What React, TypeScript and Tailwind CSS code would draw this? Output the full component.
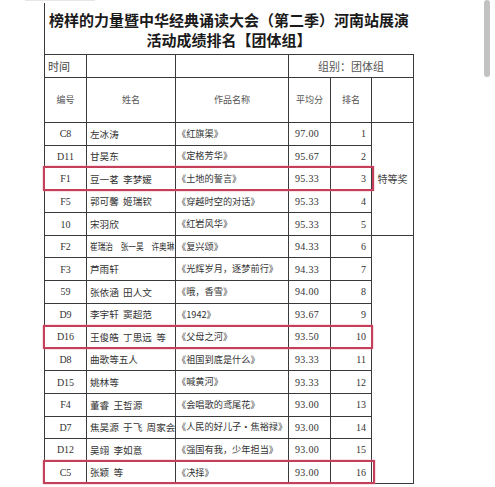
const rows = [
  { code: "C8", name: "左冰涛", work: "《红旗渠》", score: "97.00", rank: "1" },
  { code: "D11", name: "甘昊东", work: "《定格芳华》", score: "95.67", rank: "2" },
  { code: "F1", name: "豆一茗  李梦媛", work: "《土地的誓言》", score: "95.33", rank: "3" },
  { code: "F5", name: "郭可馨  姬瑞钦", work: "《穿越时空的对话》", score: "95.33", rank: "4" },
  { code: "10", name: "宋羽欣", work: "《红岩风华》", score: "95.33", rank: "5" },
  { code: "F2", name: "崔瑞治　张一昊　许奥琳", work: "《复兴颂》", score: "94.33", rank: "6", squeeze: true },
  { code: "F3", name: "芦雨轩", work: "《光辉岁月，逐梦前行》", score: "94.33", rank: "7" },
  { code: "59", name: "张依涵  田人文", work: "《哦，香雪》", score: "94.00", rank: "8" },
  { code: "D9", name: "李宇轩  窦超范", work: "《1942》", score: "93.67", rank: "9" },
  { code: "D16", name: "王俊皓  丁思远  等", work: "《父母之河》", score: "93.50", rank: "10" },
  { code: "D8", name: "曲歌等五人", work: "《祖国到底是什么》", score: "93.33", rank: "11" },
  { code: "D15", name: "姚林等", work: "《喊黄河》", score: "93.33", rank: "12" },
  { code: "F4", name: "董睿  王哲源", work: "《会唱歌的鸢尾花》", score: "93.00", rank: "13" },
  { code: "D7", name: "焦昊源  于飞  周家会", work: "《人民的好儿子・焦裕禄》", score: "93.00", rank: "14" },
  { code: "D12", name: "吴翊  李如意", work: "《强国有我，少年担当》", score: "93.00", rank: "15" },
  { code: "C5", name: "张颖  等", work: "《决择》", score: "93.00", rank: "16" },
];

const cell = "border border-[#3a3a3a] p-0 overflow-hidden whitespace-pre";
const serif = "font-['Liberation_Serif','Noto_Sans_CJK_SC',serif]";

function Highlight({ top, height, width }: { top: string; height: string; width: string }) {
  // red marker boxes drawn over the sheet
  return (
    <div
      className={`absolute left-[-1px] ${top} ${height} ${width} border-[2.5px] border-[#c4405a] shadow-[0_0_1.5px_#e58a9a] pointer-events-none`}
    />
  );
}

export default function App() {
  return (
    <div className="relative w-[495px] h-[487px] overflow-hidden bg-white text-[#333] font-['Noto_Sans_CJK_SC',sans-serif]">
      <div className="ml-[25px] w-[70px] h-px bg-[#e6e6e6]" />

      <div className="ml-[44px] w-[369px]">
        <div className="mt-[2px] h-[51px] pt-[7px] border-l border-[#3a3a3a] text-center text-[15px] leading-[20px] font-bold text-[#1a1a1a]">
          <div className="whitespace-nowrap">榜样的力量暨中华经典诵读大会（第二季）河南站展演</div>
          <div>活动成绩排名【团体组】</div>
        </div>

        <div className="relative">
          <table className="table-fixed border-collapse w-[369px] text-[10px]">
            <colgroup>
              <col className="w-[42px]" />
              <col className="w-[89px]" />
              <col className="w-[113px]" />
              <col className="w-[42px]" />
              <col className="w-[41px]" />
              <col className="w-[42px]" />
            </colgroup>
            <tbody>
              <tr className="h-[23px]">
                <td className={`${cell} pl-[3px] text-[11px] text-[#444]`}>时间</td>
                <td className={cell} />
                <td className={cell} />
                <td colSpan={3} className={`${cell} text-center text-[11px] text-[#555]`}>
                  组别：团体组
                </td>
              </tr>
              <tr className="h-[45px] text-[9px] text-[#555]">
                <td className={`${cell} text-center`}>编号</td>
                <td className={`${cell} text-center`}>姓名</td>
                <td className={`${cell} text-center`}>作品名称</td>
                <td className={`${cell} text-center`}>平均分</td>
                <td className={`${cell} text-center`}>排名</td>
                <td className={cell} />
              </tr>
              {rows.map((r, i) => (
                <tr key={r.code} className="h-[22.58px]">
                  <td className={`${cell} text-center ${serif}`}>{r.code}</td>
                  <td className={`${cell} pl-[3px] text-[9.6px]`}>
                    {r.squeeze ? (
                      <span className="inline-block origin-left scale-x-[0.8]">{r.name}</span>
                    ) : (
                      r.name
                    )}
                  </td>
                  <td className={`${cell} pl-[1px] text-[9.2px]`}>{r.work}</td>
                  <td className={`${cell} pl-[6px] ${serif} tracking-[0.3px]`}>{r.score}</td>
                  <td className={`${cell} text-right pr-[5px] ${serif}`}>{r.rank}</td>
                  {i === 0 && (
                    <td rowSpan={5} className={`${cell} text-center text-[#444]`}>
                      特等奖
                    </td>
                  )}
                  {i === 5 && <td rowSpan={11} className={cell} />}
                </tr>
              ))}
            </tbody>
          </table>

          <Highlight top="top-[112px]" height="h-[25px]" width="w-[331px]" />
          <Highlight top="top-[271px]" height="h-[24px]" width="w-[330px]" />
          <Highlight top="top-[406px]" height="h-[24px]" width="w-[332px]" />
        </div>
      </div>

      <div className="absolute left-[484px] top-0 w-[6px] h-[77px] rounded-full bg-[#c2c2c2]" />
    </div>
  );
}
